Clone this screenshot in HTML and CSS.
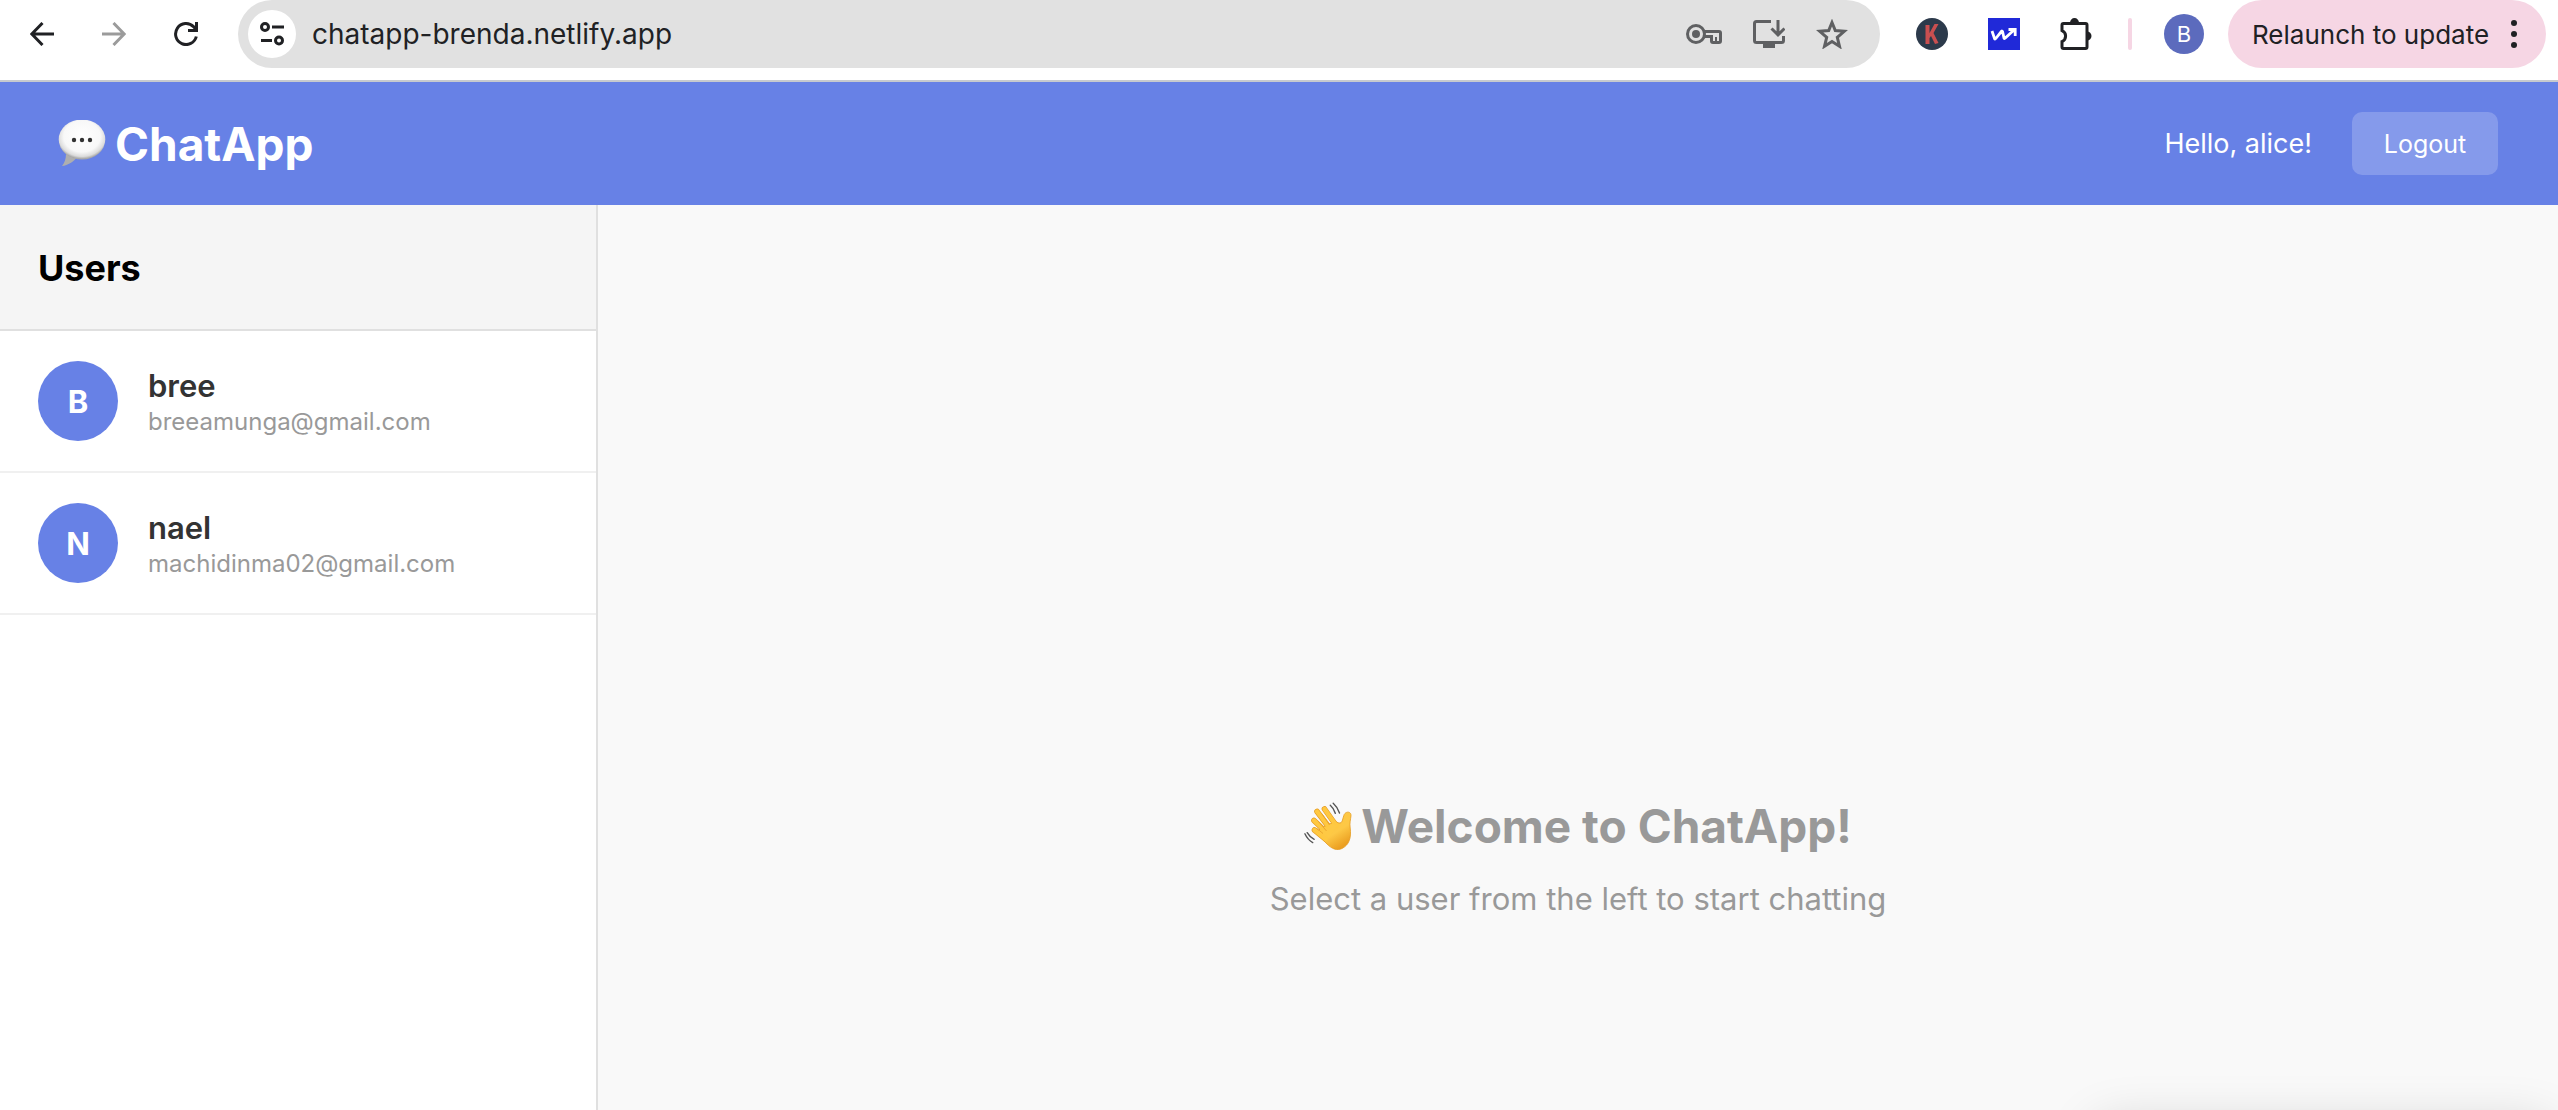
FILE: index.html
```html
<!DOCTYPE html>
<html lang="en">
<head>
<meta charset="utf-8">
<title>ChatApp</title>
<link rel="stylesheet" href="styles.css">
</head>
<body>
<div class="toolbar">
  <div class="nav">
    <button class="icon-btn" aria-label="Back"><svg width="24" height="24" viewBox="0 0 24 24" fill="none" stroke="#202124" stroke-width="3"><path d="M24 12H2M12.500 1 1.800 12l10.700 11"/></svg></button>
    <button class="icon-btn" aria-label="Forward"><svg width="24" height="24" viewBox="0 0 24 24" fill="none" stroke="#9b9b9b" stroke-width="3"><path d="M0 12h22M11.500 1l10.700 11-10.700 11"/></svg></button>
    <button class="icon-btn" aria-label="Reload"><svg width="24" height="24" viewBox="0 0 24 24" fill="none" stroke="#202124" stroke-width="3"><path d="M22.300 14.500A10.500 10.500 0 1 1 19.500 4.600L22 7.500"/><path d="M22.500 0v8.500H14"/></svg></button>
  </div>
  <div class="omnibox">
    <button class="site-info" aria-label="Site information"><svg width="24" height="24" viewBox="0 0 24 24" fill="none" stroke="#202124" stroke-width="3"><circle cx="5" cy="5" r="3.500"/><path d="M12 5h12M1 18.500h11"/><circle cx="19" cy="18.500" r="3.500"/></svg></button>
    <input class="url" type="text" aria-label="Address" value="chatapp-brenda.netlify.app">
    <div class="omni-actions">
      <button class="icon-btn" aria-label="Passwords"><svg width="36" height="20" viewBox="0 0 36 20" fill="none" stroke="#5f6062" stroke-width="3"><circle cx="10" cy="10" r="8.500"/><circle cx="10" cy="10" r="4" fill="#5f6062" stroke="none"/><path d="M17.500 7.500H33q1.500 0 1.500 1.500v8q0 1.500-1.500 1.500h-6q-1.500 0-1.500-1.500v-4.500h-8"/><path d="M30 13v5" stroke-width="2"/></svg></button>
      <button class="icon-btn" aria-label="Install app"><svg width="32" height="28" viewBox="0 0 32 28" fill="none" stroke="#5f6062" stroke-width="3"><path d="M18 1.500H3.500q-2 0-2 2v17q0 2 2 2h25q2 0 2-2V16"/><path d="M10 25.500h12" stroke-width="5"/><path d="M25 0v14M18.500 8.500l6.500 6.300 6.500-6.300"/></svg></button>
      <button class="icon-btn" aria-label="Bookmark"><svg width="32" height="30" viewBox="0 0 32 30" fill="none" stroke="#5f6062" stroke-width="3"><path d="M16 3.500l3.300 8 9 .800-7 6 2.200 9-7.500-4.700-7.500 4.700 2.200-9-7-6 9-.800z"/></svg></button>
    </div>
  </div>
  <div class="extensions">
    <button class="icon-btn" aria-label="K extension"><svg width="32" height="32" viewBox="0 0 32 32"><circle cx="16" cy="16" r="16" fill="#2c3a4b"/><path d="M9.500 7h4v8l5-9h4l-5 9 5 10-3.500 1-4-8-1.500 2v6h-4z" fill="#c94f50"/></svg></button>
    <button class="icon-btn" aria-label="Chart extension"><svg width="32" height="32" viewBox="0 0 32 32"><path fill="#2029d8" d="M0 0h32v32H0z"/><path d="M4 13l2.500 7.500q.500 1 1.300 0l5.700-7.200q.700-.700 1 .200l1.500 6.500q.500 1 1.300 0L26 12M20.500 11.500h6.700V18" fill="none" stroke="#fff" stroke-width="2.800"/></svg></button>
    <button class="icon-btn" aria-label="Extensions"><svg width="32" height="32" viewBox="0 0 32 32"><path d="M3.500 5.500h22q1.500 0 1.500 1.500v22q0 1.500-1.500 1.500h-22Q2 30.500 2 29v-5.500a6 6 0 0 0 0-11V7q0-1.500 1.500-1.500z" fill="none" stroke="#202124" stroke-width="3"/><path d="M10 5a4.500 5 0 0 1 9 0zM27 13.500a4.500 4.500 0 0 1 0 9z" fill="#202124"/></svg></button>
  </div>
  <span class="divider"></span>
  <button class="profile" aria-label="Profile">B</button>
  <button class="relaunch">Relaunch to update<svg width="6" height="28" viewBox="0 0 6 28" fill="#202124"><circle cx="3" cy="3" r="3"/><circle cx="3" cy="14" r="3"/><circle cx="3" cy="25" r="3"/></svg></button>
</div>

<header class="header">
  <h1 class="brand">
    <svg class="emoji" width="48" height="48" viewBox="0 1 48 48" aria-hidden="true">
      <defs><radialGradient id="bubble" cx=".5" cy=".42" r=".56"><stop offset="0" stop-color="#fff"/><stop offset=".7" stop-color="#f8f8f8"/><stop offset=".9" stop-color="#dcdcdc"/><stop offset="1" stop-color="#a9a9a9"/></radialGradient></defs>
      <path d="M8 35c0 5-1.500 9-4 12 6-.500 12-4.500 15-9z" fill="#aeaeae"/>
      <ellipse cx="24" cy="20.500" rx="23.300" ry="20" fill="url(#bubble)"/>
      <g fill="#333"><circle cx="16" cy="21" r="2.200"/><circle cx="24" cy="21" r="2.200"/><circle cx="32" cy="21" r="2.200"/></g>
    </svg>
    ChatApp
  </h1>
  <div class="session">
    <span class="greeting">Hello, alice!</span>
    <button class="logout">Logout</button>
  </div>
</header>

<div class="layout">
  <aside class="sidebar">
    <h2 class="sidebar-title">Users</h2>
    <ul class="users">
      <li class="user"><span class="avatar">B</span><div><div class="name">bree</div><div class="email">breeamunga@gmail.com</div></div></li>
      <li class="user"><span class="avatar">N</span><div><div class="name">nael</div><div class="email">machidinma02@gmail.com</div></div></li>
    </ul>
  </aside>
  <main class="welcome">
    <h2 class="welcome-title">
      <svg class="emoji" width="48" height="48" viewBox="0 0 48 48" aria-hidden="true">
        <defs><linearGradient id="skin" x1="0" y1="0" x2=".6" y2="1"><stop offset="0" stop-color="#ffc83f"/><stop offset=".65" stop-color="#fdc846"/><stop offset="1" stop-color="#eb9f21"/></linearGradient></defs>
        <g fill="none" stroke="#e59a20" stroke-linecap="round" stroke-width="5.600"><path d="M20.500 7l12 17M13 9.500l13 17M10 18.500L23 31M10.500 28l11 9"/></g>
        <path d="M17 26L31 19.500l4 1.500q2.500.500 3.200-2l1.600-5.500c1.300-4.500 7.400-4.500 7.200 0-.300 4-1.600 7-.800 12.500C47.500 36 45 43 38 46.500c-5 2.500-10 .500-15-4.500L12 31z" fill="url(#skin)" stroke="#e59a20" stroke-width=".800"/>
        <g fill="none" stroke="#ffc840" stroke-linecap="round" stroke-width="4.400"><path d="M20.500 7l12 17M13 9.500l13 17M10 18.500L23 31M10.500 28l11 9"/></g>
        <path d="M17 30l8 6 8-12-4-3z" fill="#fec944"/>
        <g fill="none" stroke="#e9a42c" stroke-width=".900"><path d="M18 12l7.500 11M14.500 19.500l8 9.500M13 26.500l6 5"/></g>
        <g fill="none" stroke="#555" stroke-linecap="round" stroke-width="1.400"><path d="M26.300 3.300q3.500 3 5 8M29.200 1.200q4.500 4 6.300 9.800M3.200 30.700q2.500 4.500 7 6.600M.900 31.800q2.800 6 7.800 8.800"/></g>
      </svg>
      Welcome to ChatApp!
    </h2>
    <p class="hint">Select a user from the left to start chatting</p>
  </main>
</div>
<div class="popup"></div>
</body>
</html>
```
FILE: styles.css
```css
* { box-sizing: border-box; margin: 0; padding: 0; }

body {
  display: flex;
  flex-direction: column;
  height: 100vh;
  overflow: hidden;
  background: #f9f9f9;
  font-family: Inter, "Liberation Sans", sans-serif;
}

button { border: 0; background: none; font: inherit; color: inherit; cursor: pointer; }
svg { display: block; }

.toolbar {
  display: flex;
  align-items: flex-start;
  flex: none;
  height: 82px;
  padding-right: 12px;
  border-bottom: 2px solid #c7cacf;
  background: #fff;
  color: #202124;
}
.toolbar > * { flex: none; }

.nav, .omni-actions, .extensions { display: flex; align-items: center; height: 68px; }
.nav { gap: 48px; padding: 0 40px 0 30px; }
.icon-btn { flex: none; }

.toolbar > .omnibox {
  display: flex;
  align-items: center;
  flex: 1;
  min-width: 0;
  height: 68px;
  padding: 0 32px 0 10px;
  border-radius: 34px;
  background: #e1e1e1;
}
.site-info {
  display: grid;
  place-items: center;
  flex: none;
  width: 48px;
  height: 48px;
  border-radius: 50%;
  background: #fff;
}
.url {
  flex: 1;
  min-width: 0;
  margin-left: 16px;
  border: 0;
  outline: 0;
  background: none;
  font: 400 28px/36px Inter, "Liberation Sans", sans-serif;
  color: #202124;
}
.omni-actions { gap: 31px; }

.extensions { gap: 40px; margin-left: 36px; }
.divider { width: 4px; height: 32px; margin: 18px 32px 0 36px; border-radius: 2px; background: #f6d6e4; }
.profile {
  width: 40px;
  height: 40px;
  margin: 14px 24px 0 0;
  border-radius: 50%;
  background: #5c6bbd;
  font-size: 22px;
  color: #fff;
}
.relaunch {
  display: flex;
  align-items: center;
  justify-content: space-between;
  width: 318px;
  height: 68px;
  padding: 0 29px 0 24px;
  border-radius: 34px;
  background: #f6d6e4;
  font-size: 26px;
}

.header {
  display: flex;
  align-items: center;
  justify-content: space-between;
  flex: none;
  height: 123px;
  padding: 0 60px 0 58px;
  background: #6781e6;
  color: #fff;
}
.brand, .welcome-title { display: flex; align-items: center; gap: 9px; font-size: 46px; line-height: 58px; font-weight: 700; }
.session { display: flex; align-items: center; gap: 40px; font-size: 27px; }
.logout {
  width: 146px;
  height: 63px;
  border-radius: 10px;
  background: rgba(255, 255, 255, .2);
  font-size: 25px;
}

.layout { display: flex; flex: 1; min-height: 0; }
.sidebar { flex: none; width: 598px; border-right: 2px solid #e0e0e0; background: #fff; }
.sidebar-title {
  padding: 41px 38px 39px;
  border-bottom: 2px solid #e0e0e0;
  background: #f5f5f5;
  font-size: 36px;
  line-height: 44px;
  font-weight: 700;
}
.users { list-style: none; }
.user { display: flex; align-items: center; gap: 30px; padding: 30px 38px; border-bottom: 2px solid #f0f0f0; }
.avatar {
  display: grid;
  place-items: center;
  width: 80px;
  height: 80px;
  border-radius: 50%;
  background: #6781e6;
  font-size: 31px;
  font-weight: 700;
  color: #fff;
}
.name { padding-top: 2px; font-size: 31px; line-height: 40px; font-weight: 600; color: #333; }
.email { font-size: 24px; line-height: 32px; color: #999; }

.welcome { display: flex; flex-direction: column; align-items: center; flex: 1; gap: 24px; padding-top: 592px; color: #999; }
.hint { font-size: 31px; line-height: 40px; }

.popup {
  position: fixed;
  top: 100%;
  right: 4px;
  width: 460px;
  height: 100px;
  margin-top: 14px;
  border-radius: 20px;
  box-shadow: 0 0 50px rgba(0, 0, 0, .17);
}
```
